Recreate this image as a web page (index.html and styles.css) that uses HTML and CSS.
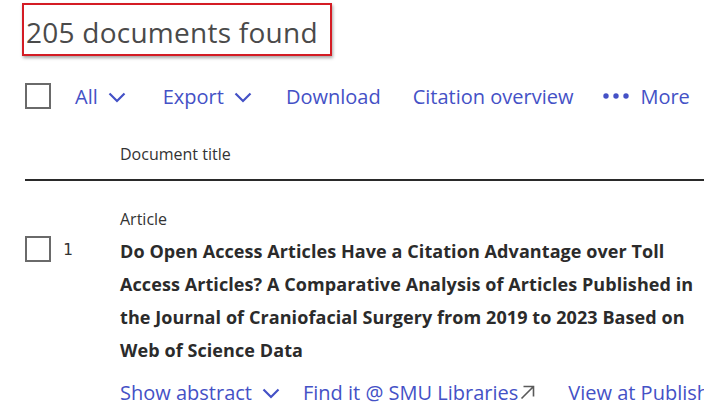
FILE: index.html
```html
<!DOCTYPE html>
<html>
<head>
<meta charset="utf-8">
<link rel="stylesheet" href="styles.css">
</head>
<body>
<div class="page">
  <div class="heading-wrap">
    <h1 class="heading">205 documents found</h1>
  </div>
  <div class="toolbar">
    <span class="checkbox"></span>
    <a class="tool tool-all">All <svg class="chev" viewBox="0 0 18 11" width="18" height="11"><path d="M1.5 1.5 L9 9 L16.5 1.5" fill="none" stroke="currentColor" stroke-width="2.2"/></svg></a>
    <a class="tool tool-export">Export <svg class="chev" viewBox="0 0 18 11" width="18" height="11"><path d="M1.5 1.5 L9 9 L16.5 1.5" fill="none" stroke="currentColor" stroke-width="2.2"/></svg></a>
    <a class="tool tool-download">Download</a>
    <a class="tool tool-cite">Citation overview</a>
    <a class="tool tool-more"><svg class="dots" viewBox="0 0 26 6" width="26" height="6"><circle cx="3" cy="3" r="2.7" fill="currentColor"/><circle cx="13" cy="3" r="2.7" fill="currentColor"/><circle cx="23" cy="3" r="2.7" fill="currentColor"/></svg>More</a>
  </div>
  <div class="col-head">Document title</div>
  <div class="result">
    <div class="result-left">
      <span class="checkbox"></span>
      <span class="num">1</span>
    </div>
    <div class="result-body">
      <div class="doctype">Article</div>
      <div class="title">Do Open Access Articles Have a Citation Advantage over Toll Access Articles? A Comparative Analysis of Articles Published in the Journal of Craniofacial Surgery from 2019 to 2023 Based on Web of Science Data</div>
      <div class="links">
        <a class="link link-abstract">Show abstract <svg class="chev" viewBox="0 0 18 11" width="18" height="11"><path d="M1.5 1.5 L9 9 L16.5 1.5" fill="none" stroke="currentColor" stroke-width="2.2"/></svg></a>
        <a class="link link-find">Find it @ SMU Libraries<svg class="ext" viewBox="0 0 15 15" width="15" height="15"><path d="M1.5 13.5 L13 2 M3.5 1.5 H13.5 V11.5" fill="none" stroke="#5a5a5a" stroke-width="1.6"/></svg></a>
        <a class="link link-view">View at Publisher</a>
      </div>
    </div>
  </div>
</div>
</body>
</html>
```
FILE: styles.css
```css
html, body {
  margin: 0;
  padding: 0;
  background: #fff;
  overflow: hidden;
}
body {
  font-family: "Open Sans", "Noto Sans", sans-serif;
  color: #2e2e2e;
}
.page {
  padding-left: 25px;
  width: 1000px;
}
.heading-wrap {
  padding-top: 3px;
  margin-left: -3px;
}
.heading {
  display: inline-block;
  margin: 0;
  font-weight: 400;
  font-size: 28px;
  line-height: 43px;
  color: #4a4a4a;
  border: 2px solid #d41c24;
  padding: 6px 12px 0 2px;
  box-shadow: 1px 2px 3px rgba(0,0,0,0.35);
  letter-spacing: 0.25px;
}
.toolbar {
  display: flex;
  align-items: center;
  height: 26px;
  margin-top: 27px;
}
.checkbox {
  display: inline-block;
  box-sizing: border-box;
  width: 26px;
  height: 26px;
  border: 2px solid #6a6a6a;
  flex: none;
}
.tool {
  color: #4451c6;
  font-size: 20px;
  display: flex;
  align-items: center;
  gap: 10px;
}
.tool-all { margin-left: 24px; }
.tool-export { margin-left: 37px; }
.tool-download { margin-left: 34px; }
.tool-cite { margin-left: 32px; }
.tool-more { margin-left: 30px; gap: 11px; }
.chev { display: block; margin-top: 2px; }
.col-head {
  margin-top: 34px;
  padding-left: 95px;
  font-size: 16px;
  line-height: 22px;
  color: #333;
  padding-bottom: 14px;
  border-bottom: 2px solid #2a2a2a;
}
.result {
  display: flex;
  padding-top: 27px;
}
.result-left {
  width: 95px;
  flex: none;
  display: flex;
  align-items: center;
  gap: 12px;
  height: 26px;
  margin-top: 28px;
}
.num {
  font-family: "DejaVu Sans Mono", monospace;
  font-size: 16px;
  color: #333;
}
.doctype {
  font-size: 16px;
  line-height: 22px;
  color: #333;
}
.title {
  margin-top: 5px;
  font-weight: 700;
  font-size: 18px;
  line-height: 33px;
  letter-spacing: 0.08px;
  color: #2b2b2b;
  width: 580px;
}
.links {
  display: flex;
  align-items: center;
  margin-top: 12px;
  white-space: nowrap;
}
.link {
  color: #4451c6;
  font-size: 20px;
  display: flex;
  align-items: center;
  gap: 10px;
}
.link-find { margin-left: 23px; gap: 2px; }
.link-view { margin-left: 33px; }
```
